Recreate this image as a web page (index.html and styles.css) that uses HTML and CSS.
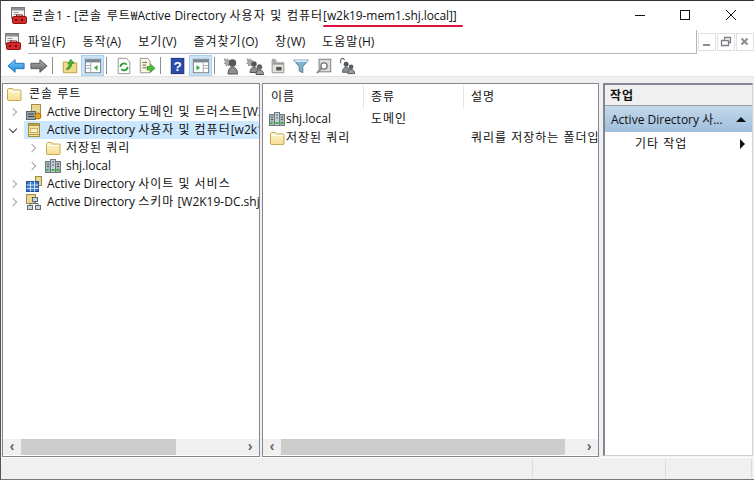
FILE: index.html
```html
<!DOCTYPE html>
<html lang="ko">
<head>
<meta charset="utf-8">
<title>콘솔1</title>
<link rel="stylesheet" href="styles.css">
</head>
<body>
<svg class="defs" width="0" height="0">
  <defs>
    <linearGradient id="fold" x1="0" y1="0" x2="0" y2="1"><stop offset="0" stop-color="#fff6cf"/><stop offset="1" stop-color="#f6dd92"/></linearGradient>
    <linearGradient id="blue" x1="0" y1="0" x2="0" y2="1"><stop offset="0" stop-color="#7cc8f5"/><stop offset="1" stop-color="#2288dc"/></linearGradient>
    <linearGradient id="gray" x1="0" y1="0" x2="0" y2="1"><stop offset="0" stop-color="#b0b0b0"/><stop offset="1" stop-color="#606060"/></linearGradient>
    <symbol id="folder" viewBox="0 0 16 16">
      <path d="M1.500 14V3.500l1-1h4l1 1.500h7l.5.5V14l-.5.5H2z" fill="url(#fold)" stroke="#c9a94f"/>
      <path d="M2.500 5.500h11.500" stroke="#fff" fill="none"/>
    </symbol>
    <symbol id="book" viewBox="0 0 16 16">
      <rect x="2.500" y="1.500" width="11" height="13" fill="#efe0a0" stroke="#a38c3c"/>
      <rect x="3" y="2" width="10" height="2" fill="#b59b48"/>
      <rect x="4.500" y="6.500" width="7" height="4" fill="#fbf3cc" stroke="#c8b36a"/>
      <path d="M3 12.500h10" stroke="#b59b48"/>
    </symbol>
    <symbol id="domain" viewBox="0 0 16 16">
      <rect x="0.500" y="3.500" width="5" height="11" fill="#a9b6bb" stroke="#6c7a80"/>
      <rect x="10.500" y="3.500" width="5" height="11" fill="#a9b6bb" stroke="#6c7a80"/>
      <rect x="5.500" y="1.500" width="5" height="13" fill="#c9d2d6" stroke="#6c7a80"/>
      <path d="M2 6h2M7 4h2M12 6h2M2 8.500h2M7 7h2M12 8.500h2" stroke="#4c585e"/>
      <path d="M1.500 12h2M6.500 12h3M11.500 12h3" stroke="#3fae3f" stroke-width="2"/>
    </symbol>
    <symbol id="trust" viewBox="0 0 16 16">
      <rect x="5.500" y="0.500" width="9" height="11" fill="#e8d692" stroke="#a38c3c"/>
      <rect x="0.500" y="7.500" width="9" height="8" fill="#9aa7ae" stroke="#56636a"/>
      <path d="M2 10h6M2 12.500h6" stroke="#38454c"/>
      <circle cx="12" cy="12" r="3" fill="#e9a91d" stroke="#a66f0a"/>
    </symbol>
    <symbol id="sites" viewBox="0 0 16 16">
      <rect x="9.500" y="0.500" width="6" height="9" fill="#e8d692" stroke="#a38c3c"/>
      <rect x="0.500" y="5.500" width="12" height="10" fill="#3d78c9" stroke="#1f4f96"/>
      <path d="M4.500 5.500v10M8.500 5.500v10M.5 9h12M.5 12.500h12" stroke="#cfe0f5"/>
    </symbol>
    <symbol id="schema" viewBox="0 0 16 16">
      <rect x="0.500" y="0.500" width="9" height="9" fill="#e8d692" stroke="#a38c3c"/>
      <rect x="6.500" y="3.500" width="5" height="4" fill="#cfd6da" stroke="#5d6a70"/>
      <rect x="1.500" y="11.500" width="5" height="4" fill="#cfd6da" stroke="#5d6a70"/>
      <rect x="9.500" y="11.500" width="5" height="4" fill="#cfd6da" stroke="#5d6a70"/>
      <path d="M4 11.500V9.500h8v2M9 7.500v2" stroke="#5d6a70" fill="none"/>
    </symbol>
    <symbol id="mmc" viewBox="0 0 18 18">
      <rect x="1.500" y="0.500" width="13" height="11" fill="#f4f4f4" stroke="#7a7a7a"/>
      <rect x="2" y="1" width="12" height="2.500" fill="#8f8f8f"/>
      <path d="M3.500 5.500h5M3.500 7.500h5" stroke="#9a9a9a"/>
      <path d="M6.500 9.500V8h6v1.500" fill="none" stroke="#7d1010"/>
      <rect x="2.500" y="9.500" width="14" height="7" rx="1" fill="#d62a2a" stroke="#8c1414"/>
      <path d="M5 13h2M11 13h2" stroke="#5a0c0c" stroke-width="2"/>
    </symbol>
    <symbol id="person" viewBox="0 0 18 18">
      <path d="M1.500 1.500l1.500 1.500L4.500 1.500 5 3.500l2-.5-.5 2L8 6.500 6 7 6 9 4.500 8 3 9 3 7 1 6.500l1.500-1.500L1.500 3z" fill="#a9a9a9" stroke="#777" stroke-width=".5"/>
      <circle cx="9.500" cy="6" r="3.700" fill="#55595c"/>
      <path d="M5 17c0-4.500 2-7 4.500-7s5 2.500 5 7z" fill="#8a9094" stroke="#555"/>
    </symbol>
    <symbol id="group" viewBox="0 0 18 18">
      <path d="M1 1.500l1.500 1.500L4 1.500 4.500 3.500l2-.5-.5 2L7.500 6.500 5.500 7 5.500 9 4 8 2.500 9 2.500 7 .5 6.500 2 5z" fill="#a9a9a9" stroke="#777" stroke-width=".5"/>
      <circle cx="8" cy="7" r="2.700" fill="#4f5457"/>
      <circle cx="13.500" cy="10" r="2.700" fill="#5d6266"/>
      <path d="M4 15.500c0-3 2-5.500 4-5.500s4 2.500 4 5.500z" fill="#8a9094" stroke="#555"/>
      <path d="M10 17.500c0-3 1-4.500 3.500-4.500s4 1.500 4 4.500z" fill="#9aa0a4" stroke="#555"/>
    </symbol>
  </defs>
</svg>

<div class="window">
  <header class="titlebar">
    <svg class="title-icon"><use href="#mmc"/></svg>
    <span class="title-text"><span class="ko">콘솔</span>1 - [<span class="ko">콘솔 루트</span>₩Active Directory <span class="ko">사용자 및 컴퓨터</span><span class="marked">[w2k19-mem1.shj.local]]</span></span>
    <div class="caption">
      <svg class="cap" viewBox="0 0 46 29"><path d="M19 14.500h10" stroke="#111" fill="none"/></svg>
      <svg class="cap" viewBox="0 0 46 29"><rect x="18.500" y="9.500" width="9" height="9" fill="none" stroke="#111"/></svg>
      <svg class="cap" viewBox="0 0 46 29"><path d="M18 9l10 10M28 9L18 19" stroke="#111" fill="none"/></svg>
    </div>
  </header>

  <nav class="menubar">
    <svg class="menu-icon"><use href="#mmc"/></svg>
    <ul class="menu">
      <li><span class="ko">파일</span>(F)</li><li><span class="ko">동작</span>(A)</li><li><span class="ko">보기</span>(V)</li><li><span class="ko">즐겨찾기</span>(O)</li><li><span class="ko">창</span>(W)</li><li><span class="ko">도움말</span>(H)</li>
    </ul>
    <div class="mdi">
      <span class="mdi-btn"><svg viewBox="0 0 16 16"><path d="M4 11h7" stroke="#8a8f96" stroke-width="2"/></svg></span>
      <span class="mdi-btn"><svg viewBox="0 0 16 16"><path d="M6.500 5.500v-2h6v5h-2M3.500 6.500h7v5h-7z" fill="none" stroke="#7a7f86" stroke-width="1.300"/></svg></span>
      <span class="mdi-btn"><svg viewBox="0 0 16 16"><path d="M4.500 4.500l6 6M10.500 4.500l-6 6" stroke="#8a8f96" stroke-width="2"/></svg></span>
    </div>
  </nav>

  <div class="toolbar">
    <span class="tool"><svg viewBox="0 0 20 20"><path d="M1 10L9 3v4h10v6H9v4z" fill="url(#blue)" stroke="#1d6fb8"/></svg></span>
    <span class="tool"><svg viewBox="0 0 20 20"><path d="M19 10L11 3v4H1v6h10v4z" fill="url(#gray)" stroke="#555"/></svg></span>
    <i class="sep"></i>
    <span class="tool"><svg viewBox="0 0 20 20"><path d="M2.500 17.500V5.500h4l1 1h10v11z" fill="#f3d98a" stroke="#b99a44"/><path d="M6 13c2-1 3-3 3-6H7.500L11 2.500 14.500 7H12c0 4-2 6-5 7.500z" fill="#44b23c" stroke="#277f22" stroke-width=".7"/></svg></span>
    <span class="tool on"><svg viewBox="0 0 20 20"><rect x="1.500" y="2.500" width="17" height="15" fill="#fff" stroke="#6d7880"/><path d="M2 3h16v3H2z" fill="#7b868e"/><path d="M7.500 6.500v11M1.500 9.500h6M1.500 12.500h6" stroke="#9aa4ab"/><path d="M15 9v6l-4-3z" fill="#35ad35"/></svg></span>
    <i class="sep"></i>
    <span class="tool"><svg viewBox="0 0 20 20"><path d="M3.500 1.500h9l4 4v13h-13z" fill="#fff" stroke="#8b8b8b"/><path d="M6 11a4 4 0 0 1 7-2.500M14 11a4 4 0 0 1-7 2.500" fill="none" stroke="#2e9e33" stroke-width="2"/></svg></span>
    <span class="tool"><svg viewBox="0 0 20 20"><path d="M2.500 1.500h8l3 3v13h-11z" fill="#fbf6dc" stroke="#8b8b8b"/><path d="M5 6h5M5 9h4M5 12h4" stroke="#555"/><path d="M10 10.500h4V8l5 4.500-5 4.500v-2.500h-4z" fill="#4cbb3f" stroke="#2d8a27" stroke-width=".7"/></svg></span>
    <i class="sep"></i>
    <span class="tool"><svg viewBox="0 0 20 20"><rect x="2.500" y="1.500" width="14" height="17" fill="#2a4bb0" stroke="#122a70"/><text x="9.500" y="15" class="q">?</text></svg></span>
    <span class="tool on"><svg viewBox="0 0 20 20"><rect x="1.500" y="2.500" width="17" height="15" fill="#fff" stroke="#6d7880"/><path d="M2 3h16v3H2z" fill="#7b868e"/><path d="M12.500 6.500v11M12.500 9.500h6M12.500 12.500h6" stroke="#9aa4ab"/><path d="M5 9v6l4-3z" fill="#35ad35"/></svg></span>
    <i class="sep"></i>
    <span class="tool"><svg viewBox="0 0 20 20"><use href="#person"/></svg></span>
    <span class="tool"><svg viewBox="0 0 20 20"><use href="#group"/></svg></span>
    <span class="tool"><svg viewBox="0 0 20 20"><path d="M3.500 6.500h13v11h-13z" fill="#e3e3df" stroke="#8a8a8a"/><path d="M4 6.500h12v2H4z" fill="#9c9c9c"/><rect x="8" y="11" width="6" height="4" fill="#555"/><path d="M4 1l1 1.500L6.500 1.500 7 3l1.500 0L8 4.500 9 6H2l1-1.500z" fill="#a9a9a9"/></svg></span>
    <span class="tool"><svg viewBox="0 0 20 20"><path d="M2 3.500h16l-6 7v7l-4-2v-5z" fill="#80b4cf" stroke="#4b6f85"/><path d="M3 4.500h14" stroke="#d2ecf9" stroke-width="2"/></svg></span>
    <span class="tool"><svg viewBox="0 0 20 20"><rect x="4.500" y="2.500" width="13" height="14" fill="#dcdcdc" stroke="#777"/><circle cx="10" cy="10" r="3.500" fill="#fff" stroke="#777" stroke-width="1.500"/><path d="M7 13l-5 5" stroke="#8a8a8a" stroke-width="2"/></svg></span>
    <span class="tool"><svg viewBox="0 0 20 20"><path d="M3 7V3.500a2 2 0 0 1 4 0" fill="none" stroke="#666" stroke-width="1.200"/><circle cx="9" cy="8" r="2.700" fill="#4f5457"/><circle cx="14.500" cy="11" r="2.700" fill="#5d6266"/><path d="M5 17c0-3.500 2-6 4-6s4 2.500 4 6z" fill="#8a9094" stroke="#555"/><path d="M11 18.500c0-3 1-4.500 3.500-4.500s4 1.500 4 4.500z" fill="#9aa0a4" stroke="#555"/></svg></span>
  </div>
  <div class="band"></div>

  <main class="panes">
    <section class="pane tree-pane">
      <div class="scroll-body">
        <div class="row lvl0"><svg class="ico"><use href="#folder"/></svg><span class="ko">콘솔 루트</span></div>
        <div class="row lvl1"><i class="chev"></i><svg class="ico"><use href="#trust"/></svg><span>Active Directory <span class="ko">도메인 및 트러스트</span>[W2K19-DC.shj.local]</span></div>
        <div class="row lvl1 selected"><i class="chev open"></i><svg class="ico"><use href="#book"/></svg><span>Active Directory <span class="ko">사용자 및 컴퓨터</span>[w2k19-mem1.shj.local]</span></div>
        <div class="row lvl2"><i class="chev"></i><svg class="ico"><use href="#folder"/></svg><span class="ko">저장된 쿼리</span></div>
        <div class="row lvl2"><i class="chev"></i><svg class="ico"><use href="#domain"/></svg><span>shj.local</span></div>
        <div class="row lvl1"><i class="chev"></i><svg class="ico"><use href="#sites"/></svg><span>Active Directory <span class="ko">사이트 및 서비스</span></span></div>
        <div class="row lvl1"><i class="chev"></i><svg class="ico"><use href="#schema"/></svg><span>Active Directory <span class="ko">스키마</span> [W2K19-DC.shj.local]</span></div>
      </div>
      <div class="hscroll"><b class="arrow">‹</b><i class="track"><i class="thumb thumb-tree"></i></i><b class="arrow">›</b></div>
    </section>

    <section class="pane list-pane">
      <div class="scroll-body">
        <div class="list-head"><span class="col c1 ko">이름</span><span class="col c2 ko">종류</span><span class="col c3 ko">설명</span></div>
        <div class="list-row"><span class="col c1"><svg class="ico"><use href="#domain"/></svg>shj.local</span><span class="col c2 ko">도메인</span><span class="col c3"></span></div>
        <div class="list-row"><span class="col c1 ko"><svg class="ico"><use href="#folder"/></svg>저장된 쿼리</span><span class="col c2"></span><span class="col c3 ko">쿼리를 저장하는 폴더입니다</span></div>
      </div>
      <div class="hscroll"><b class="arrow">‹</b><i class="track"><i class="thumb thumb-list"></i></i><b class="arrow">›</b></div>
    </section>

    <aside class="pane actions">
      <div class="act-head ko">작업</div>
      <div class="act-group"><span>Active Directory 사...</span><i class="tri-up"></i></div>
      <div class="act-item"><span class="ko">기타 작업</span><i class="tri-right"></i></div>
    </aside>
  </main>

  <footer class="status"><i class="st st1"></i><i class="st st2"></i><i class="st st3"></i></footer>
</div>
</body>
</html>
```

FILE: styles.css
```css
* { box-sizing: border-box; }
html, body { margin: 0; padding: 0; }
body {
  width: 754px; height: 480px; overflow: hidden; background: #fff; color: #111;
  font: 12px/16px "Open Sans", "Noto Sans CJK KR", "Noto Sans", sans-serif;
}
.defs { position: absolute; }
.ko { letter-spacing: 1px; }
.window { width: 754px; height: 480px; display: flex; flex-direction: column; border-top: 1px solid #333; border-left: 1px solid #555; }

.titlebar { height: 29px; display: flex; align-items: center; flex: none; padding-left: 9px; background: #fff; }
.title-icon { width: 18px; height: 18px; flex: none; margin-right: 4px; }
.title-text { white-space: nowrap; flex: 1; font-size: 12px; word-spacing: 0.5px; }
.marked { position: relative; letter-spacing: -0.1px; }
.marked::after { content: ""; position: absolute; left: 0; right: -6px; bottom: -3px; height: 2px; background: #e0143c; border-radius: 1px; }
.caption { display: flex; flex: none; }
.cap { width: 46px; height: 29px; display: block; }

.menubar { height: 24px; display: flex; align-items: center; flex: none; padding-left: 3px; }
.menu-icon { width: 18px; height: 18px; flex: none; margin-right: 6px; }
.menu { list-style: none; display: flex; margin: 0; padding: 0; flex: 1; height: 24px; align-items: center; border-bottom: 1px solid #b4b4c0; gap: 17px; }
.mdi { display: flex; gap: 1px; padding-left: 1px; border-left: 1px solid #b4b4c0; height: 24px; align-items: center; }
.mdi-btn { width: 18px; height: 18px; border: 1px solid #e1e1e1; display: block; }
.mdi-btn svg { display: block; width: 16px; height: 16px; }

.toolbar { height: 22px; flex: none; display: flex; align-items: flex-start; padding: 1px 0 0 3px; background: #fff; }
.tool { width: 23px; height: 21px; display: flex; align-items: center; justify-content: center; flex: none; border: 1px solid transparent; }
.tool svg { width: 18px; height: 18px; display: block; }
.tool.on { background: #cce4f7; border-color: #a8d2f2; }
.q { font: bold 15px "Liberation Sans", sans-serif; fill: #fff; text-anchor: middle; }
.sep { width: 1px; height: 17px; background: #8e8e8e; margin: 2px 5px 0 2px; flex: none; }

.band { height: 7px; flex: none; background: #f0f0f0; border-top: 1px solid #e2e2e2; }
.panes { flex: 1; display: flex; background: #f0f0f0; min-height: 0; padding-left: 1px; }
.pane { background: #fff; border: 1px solid #828790; display: flex; flex-direction: column; min-width: 0; overflow: hidden; }
.tree-pane { width: 258px; margin-right: 2px; }
.list-pane { width: 337px; margin-right: 4px; }
.actions { width: 150px; border-right-color: #d0d0d0; border-bottom-color: #d0d0d0; border-left-width: 2px; border-top-width: 2px; margin-bottom: 1px; }
.scroll-body { flex: 1; overflow: hidden; min-height: 0; padding-top: 1px; }

.row { height: 18px; display: flex; align-items: center; white-space: nowrap; overflow: hidden; }
.lvl0 { padding-left: 3px; }
.lvl1 { padding-left: 7px; }
.lvl2 { padding-left: 26px; }
.selected { background: #cce8ff; margin-left: 21px; padding-left: 0; overflow: visible; position: relative; }
.ico { width: 16px; height: 16px; flex: none; margin-right: 5px; display: block; }
.lvl0 .ico { margin-right: 7px; }
.chev { width: 6px; height: 6px; flex: none; margin-right: 10px; border-top: 1.5px solid #a6a6a6; border-right: 1.5px solid #a6a6a6; transform: rotate(45deg); }
.chev.open { border-color: #404040; transform: rotate(135deg); position: absolute; left: -14px; top: 5px; margin: 0; }
.selected .ico { margin-left: 2px; }

.hscroll { height: 16px; display: flex; align-items: stretch; flex: none; background: #f0f0f0; margin: 0 0 1px; }
.arrow { width: 18px; flex: none; text-align: center; color: #606060; font: bold 14px/15px "Liberation Sans", sans-serif; }
.track { flex: 1; display: flex; }
.thumb { display: block; background: #cdcdcd; }
.thumb-tree { width: 155px; }
.thumb-list { width: 284px; }

.list-head { height: 24px; display: flex; align-items: flex-start; }
.list-head .col { border-right: 1px solid #e5e5e5; height: 24px; }
.list-head .c3 { border-right: 0; }
.list-row { height: 19px; display: flex; align-items: center; white-space: nowrap; }
.col { display: flex; align-items: center; flex: none; padding-left: 7px; overflow: hidden; white-space: nowrap; }
.col .ico { margin-right: 1px; }
.c1 { width: 101px; padding-left: 8px; }
.c2 { width: 100px; }
.c3 { width: 135px; }
.list-row .c1 { padding-left: 6px; }

.act-head { height: 21px; background: #f0f0f0; border-bottom: 1px solid #a0a0a0; font-weight: 700; padding: 3px 0 0 5px; flex: none; }
.act-group { height: 26px; background: linear-gradient(#c4d8ec, #9fbedc); display: flex; align-items: center; padding: 1px 6px 0 6px; justify-content: space-between; flex: none; }
.tri-up { width: 0; height: 0; border: 5px solid transparent; border-top: 0; border-bottom: 5px solid #111; }
.act-item { height: 22px; display: flex; align-items: center; justify-content: space-between; padding: 2px 7px 0 30px; flex: none; }
.tri-right { width: 0; height: 0; border: 5px solid transparent; border-right: 0; border-left: 5px solid #111; }

.status { height: 23px; flex: none; display: flex; background: #f0f0f0; border-top: 1px solid #fff; border-bottom: 1px solid #777; padding: 1px 0; }
.st { display: block; height: 100%; border-right: 1px solid #dcdcdc; flex: none; }
.st1 { width: 532px; }
.st2 { width: 133px; }
.st3 { width: 86px; }
```
